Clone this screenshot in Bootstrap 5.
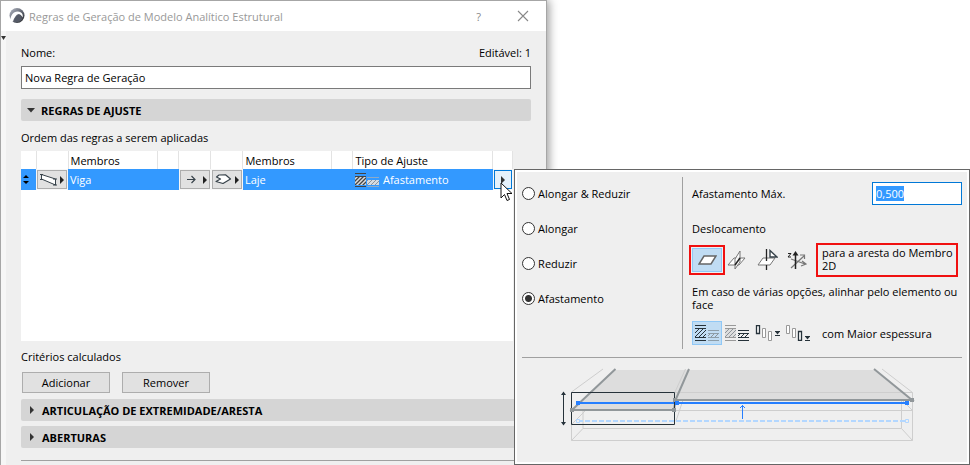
<!DOCTYPE html>
<html lang="pt">
<head>
<meta charset="utf-8">
<meta name="viewport" content="width=device-width, initial-scale=1">
<title>Regras de Geração de Modelo Analítico Estrutural</title>
<link rel="stylesheet" href="https://cdn.jsdelivr.net/npm/bootstrap@5.3.0/dist/css/bootstrap.min.css">
<style>
body{font:11px/13px "Open Sans","Noto Sans",sans-serif;color:#000;background:#fff}
svg{display:block;flex:none}
.dialog{width:56.4%;background:#efefef;border:1px solid #a6a6a6;border-bottom:0;box-shadow:2px 0 9px rgba(0,0,0,.4)}
.titlebar{height:30px;background:#fff;color:#999;padding:0 17px 0 8px}
.titlebar button{color:#888;background:none;border:0;padding:0;line-height:13px}
.rail{width:5px;background:#f6f6f6;padding-top:5px}
.panel{padding:15px 15px 0}
.name-row{margin-bottom:7px}
.field{font-size:11px;line-height:13px;min-height:0;height:23px;border:1px solid #7a7a7a;border-radius:0;padding:0 3px;color:#000;background:#fff;box-shadow:none!important}
.section-head{height:22px;background:#d5d5d5;border:0;border-radius:2px;padding:0 6px;font-weight:700;color:#000;text-align:left}
.section-head span{margin-left:6px}
.section-head .caret-right{margin:0 2px 0 3px}
.section-first{margin:10px 0}
.section-gap{margin-top:5px}
.rules-box{margin:7px 18px 0 0;background:#fff;height:190px}
.criteria{margin:9px 0}
.actions{margin-bottom:6px;padding-left:1px;gap:12px}
.rules{table-layout:fixed;width:100%}
.rules th{height:18px;padding:0 2px;font-weight:400;border-right:1px solid #e3e3e3}
.rules td{height:21px;padding:0 2px;color:#fff;background:#3399ff}
.rules td.tool{background:#f7f7f7;padding:1px}
.tool button{width:100%;height:19px;background:#e1e1e1;border:1px solid #adadad;padding:0 2px;display:flex;align-items:center;justify-content:space-between}
.tool button.active{background:#e5f1fb;border-color:#0078d7;justify-content:center}
.w-handle{width:15px}.w-tool{width:32px}.w-gap{width:21px}.w-more{width:20px}.w-first{width:18.3%}.w-second{width:18.1%}
.push{width:88px;height:21px;background:#e1e1e1;border:1px solid #adadad;padding:0;color:#000}
.rule-line{border-top:1px solid #a0a0a0}
.end-line{margin-top:12px}
.popup{position:absolute;left:53%;right:0;top:169px;background:#efefef;border:1px solid #666;box-shadow:inset 0 0 0 2px #fff;padding:7px 7px 19px}
.modes{width:160px;gap:22px;padding-top:10px}
.modes .form-check-input{width:13px;height:13px;margin:0;border:1px solid #333;background-color:#fff;box-shadow:none;float:none}
.modes .form-check-input:checked{background-image:radial-gradient(circle,#333 0 3px,transparent 4px)}
.modes label{margin-left:3px}
.options{border-left:1px solid #a0a0a0;padding:5px 0 4px 9px}
.offset-title{margin:17px 0 8px}
.align-title{margin:8px 0 10px}
.field-max{width:90px;border-color:#0078d7!important}
.field-max::selection{background:#3399ff;color:#fff}
.icon-btn{width:30px;height:24px;padding:0;border:1px solid transparent;background:none;display:flex;align-items:center;justify-content:center}
.icon-btn.on{background:#c0dcf3;border-color:#90c8f6}
.marked{outline:2px solid #f01010;outline-offset:1px}
.note{border:2px solid #f01010;padding:1px 2px 3px 4px;width:142px;height:34px}
.align-label{margin-left:10px}
.diagram{margin:9px auto 0 36px}
.cursor{position:absolute;left:-15px;top:12px}
</style>
<script src="https://cdn.jsdelivr.net/npm/bootstrap@5.3.0/dist/js/bootstrap.bundle.min.js"></script>
</head>
<body class="overflow-hidden position-relative">
<svg width="0" height="0" class="position-absolute" aria-hidden="true">
<defs>
<pattern id="hd" width="4" height="4" patternUnits="userSpaceOnUse"><path d="M-1 5L5 -1M-1 1L1 -1M3 5L5 3" stroke="#26323a" stroke-width="1"/></pattern>
<pattern id="hg" width="4" height="4" patternUnits="userSpaceOnUse"><path d="M-1 5L5 -1M-1 1L1 -1M3 5L5 3" stroke="#8d949a" stroke-width="1"/></pattern>
<pattern id="hw" width="4" height="4" patternUnits="userSpaceOnUse"><path d="M0 0H4V4H0z" fill="#ddd"/><path d="M-1 5L5 -1M-1 1L1 -1M3 5L5 3" stroke="#444" stroke-width="1.3"/></pattern>
</defs>
</svg>

<main class="dialog d-flex flex-column vh-100">
  <header class="titlebar d-flex align-items-center">
    <svg width="16" height="16" viewBox="0 0 16 16"><defs><linearGradient id="lg" x2="1" y2="1"><stop offset="0" stop-color="#b9bdc8"/><stop offset=".6" stop-color="#555a66"/><stop offset="1" stop-color="#222"/></linearGradient></defs><circle cx="8" cy="7.5" r="7.500" fill="url(#lg)"/><path d="M1 13Q1.500 7 5 4.500Q9 2.500 12 4.500Q14.500 6.500 13.500 9.500Q12 6 9.500 6Q6 7 4 13.500z" fill="#fff"/><path d="M5 13.500Q6.500 7.500 9.500 7Q12.500 7 13 11.500Q9.500 15.500 5 13.500z" fill="#555a66"/></svg>
    <span class="ms-1 flex-grow-1">Regras de Geração de Modelo Analítico Estrutural</span>
    <button type="button" class="me-4" aria-label="Ajuda">?</button>
    <button type="button" class="ms-2 ps-1" aria-label="Fechar"><svg width="12" height="12" viewBox="0 0 12 12"><path d="M1 1L11 11M11 1L1 11" stroke="#888" stroke-width="1.1"/></svg></button>
  </header>
  <div class="d-flex flex-grow-1">
    <div class="rail"><svg width="5" height="4" viewBox="0 0 5 4"><path d="M0 0H5L2.500 4z" fill="#333"/></svg></div>
    <div class="panel flex-grow-1">
      <div class="name-row d-flex justify-content-between">
        <label for="ruleName">Nome:</label><span>Editável: 1</span>
      </div>
      <input id="ruleName" class="form-control field" value="Nova Regra de Geração">
      <button type="button" class="section-head section-first w-100 d-flex align-items-center"><svg width="8" height="5" viewBox="0 0 8 5"><path d="M0 0H8L4 4.500z" fill="#333"/></svg><span>REGRAS DE AJUSTE</span></button>
      <div>Ordem das regras a serem aplicadas</div>
      <div class="rules-box">
        <table class="rules">
          <colgroup><col class="w-handle"><col class="w-tool"><col class="w-first"><col class="w-gap"><col class="w-tool"><col class="w-tool"><col class="w-second"><col class="w-gap"><col><col class="w-more"></colgroup>
          <thead><tr><th></th><th></th><th>Membros</th><th></th><th></th><th></th><th>Membros</th><th></th><th>Tipo de Ajuste</th><th></th></tr></thead>
          <tbody><tr>
            <td><svg width="6" height="9" viewBox="0 0 6 9"><path d="M0 3L3 0L6 3zM0 6L3 9L6 6z" fill="#000"/></svg></td>
            <td class="tool"><button type="button" aria-label="Viga"><svg width="17" height="13" viewBox="0 0 17 13"><path d="M1.500 1.500L15.500 6V12L1.500 6z" fill="#fff" stroke="#37424a"/><path d="M0 1.500H3M0 6.500H3M13 6H17M13 12H17" stroke="#37424a"/></svg><svg width="4" height="8" viewBox="0 0 4 8"><path d="M0 0L4 4L0 8z" fill="#222"/></svg></button></td>
            <td colspan="2">Viga</td>
            <td class="tool"><button type="button" aria-label="Direção"><svg class="ms-1" width="9" height="9" viewBox="0 0 9 9"><path d="M0 4.500H8M4.500 1L8 4.500L4.500 8" fill="none" stroke="#37424a" stroke-width="1.200"/></svg><svg width="4" height="8" viewBox="0 0 4 8"><path d="M0 0L4 4L0 8z" fill="#222"/></svg></button></td>
            <td class="tool"><button type="button" aria-label="Laje"><svg width="17" height="11" viewBox="0 0 17 11"><path d="M4 1L10.500 .8L15.500 5L8 9.500L1 7.500L5.500 5L1.500 3z" fill="#fff" stroke="#37424a" stroke-width="1.200" stroke-linejoin="round"/></svg><svg width="4" height="8" viewBox="0 0 4 8"><path d="M0 0L4 4L0 8z" fill="#222"/></svg></button></td>
            <td colspan="2">Laje</td>
            <td><div class="d-flex align-items-center gap-1"><svg width="24" height="14" viewBox="0 0 24 14"><path d="M0 .5H11M0 13.500H11M0 3.500H11" stroke="#444"/><path d="M0 4H11V12H0z" fill="url(#hw)"/><path d="M12 4.500H24M12 13.500H24" stroke="#8caac8"/><path d="M12 7H24V12H12z" fill="#d5dbe2"/><path d="M12 7H24V12H12z" fill="url(#hg)"/></svg><span>Afastamento</span></div></td>
            <td class="tool"><button type="button" class="active" aria-label="Opções"><svg width="4" height="8" viewBox="0 0 4 8"><path d="M0 0L4 4L0 8z" fill="#333"/></svg></button></td>
          </tr></tbody>
        </table>
      </div>
      <div class="criteria">Critérios calculados</div>
      <div class="actions d-flex"><button type="button" class="push">Adicionar</button><button type="button" class="push">Remover</button></div>
      <button type="button" class="section-head w-100 d-flex align-items-center"><svg class="caret-right" width="4" height="8" viewBox="0 0 4 8"><path d="M0 0L4 4L0 8z" fill="#333"/></svg><span>ARTICULAÇÃO DE EXTREMIDADE/ARESTA</span></button>
      <button type="button" class="section-head section-gap w-100 d-flex align-items-center"><svg class="caret-right" width="4" height="8" viewBox="0 0 4 8"><path d="M0 0L4 4L0 8z" fill="#333"/></svg><span>ABERTURAS</span></button>
      <div class="rule-line end-line"></div>
    </div>
  </div>
</main>

<section class="popup" aria-label="Tipo de Ajuste">
  <div class="d-flex">
    <div class="modes d-flex flex-column flex-shrink-0">
      <div class="d-flex align-items-center"><input class="form-check-input" type="radio" name="mode" id="m1"><label for="m1">Alongar &amp; Reduzir</label></div>
      <div class="d-flex align-items-center"><input class="form-check-input" type="radio" name="mode" id="m2"><label for="m2">Alongar</label></div>
      <div class="d-flex align-items-center"><input class="form-check-input" type="radio" name="mode" id="m3"><label for="m3">Reduzir</label></div>
      <div class="d-flex align-items-center"><input class="form-check-input" type="radio" name="mode" id="m4" checked><label for="m4">Afastamento</label></div>
    </div>
    <div class="options flex-grow-1">
      <div class="d-flex align-items-center justify-content-between"><label for="maxGap">Afastamento Máx.</label><input id="maxGap" class="form-control field field-max" value="0,500"></div>
      <div class="offset-title">Deslocamento</div>
      <div class="d-flex align-items-center">
        <button type="button" class="icon-btn on marked" aria-label="Aresta do Membro 2D"><svg width="19" height="10" viewBox="0 0 19 10"><path d="M6 1H18L13 9H1z" fill="#fff" stroke="#666" stroke-width="1.500"/></svg></button>
        <button type="button" class="icon-btn" aria-label="Plano"><svg width="20" height="20" viewBox="0 0 20 20"><path d="M1 15L7 8H18L12 15z" fill="#fff" stroke="#777"/><path d="M8 9L13 1V12L8 19z" fill="#fff" fill-opacity=".8" stroke="#777"/><path d="M8 15L13 8" stroke="#222" stroke-width="1.500"/></svg></button>
        <button type="button" class="icon-btn" aria-label="Perpendicular"><svg width="21" height="22" viewBox="0 0 21 22"><path d="M1 16L6 9H18L13 16z" fill="#fff" stroke="#777"/><path d="M9.500 0V12M9.500 16V21" stroke="#222" stroke-width="1.300"/><path d="M13 1.500V8H20z" fill="#fff" stroke="#37424a" stroke-width="1.400"/></svg></button>
        <button type="button" class="icon-btn" aria-label="Eixo Z"><svg width="20" height="19" viewBox="0 0 20 19"><path d="M1 2.500H4L1 6H4" fill="none" stroke="#222"/><path d="M4 8L18 13M4 17L17 5M15 10L19 13L14 15M13 4H17.500V8" fill="none" stroke="#777" stroke-width="1.200"/><path d="M8.500 18V2" stroke="#222" stroke-width="1.500"/><path d="M5.500 4.500L8.500 0L11.500 4.500z" fill="#222"/></svg></button>
        <div class="note ms-auto me-1">para a aresta do Membro 2D</div>
      </div>
      <div class="align-title">Em caso de várias opções, alinhar pelo elemento ou face</div>
      <div class="d-flex align-items-center">
        <button type="button" class="icon-btn on" aria-label="Maior espessura"><svg width="25" height="16" viewBox="0 0 25 16"><path d="M0 .5H11M0 3.500H11M0 12.500H11M0 15.500H11" stroke="#26323a"/><path d="M0 4H11V12H0z" fill="url(#hd)"/><path d="M13 5.500H24M13 8.500H24M13 12.500H24M13 15.500H24" stroke="#8c9da9"/><path d="M13 9H24V12H13z" fill="url(#hg)"/></svg></button>
        <button type="button" class="icon-btn" aria-label="Menor espessura"><svg width="25" height="16" viewBox="0 0 25 16"><path d="M0 .5H11M0 3.500H11M0 12.500H11M0 15.500H11" stroke="#999"/><path d="M0 4H11V12H0z" fill="#ddd"/><path d="M0 4H11V12H0z" fill="url(#hg)"/><path d="M13 5.500H24M13 8.500H24M13 12.500H24M13 15.500H24" stroke="#26323a"/><path d="M13 9H24V12H13z" fill="url(#hd)"/></svg></button>
        <button type="button" class="icon-btn" aria-label="Mais alto"><svg width="25" height="16" viewBox="0 0 25 16"><path d="M1.500 .5H4.500V8.500H1.500z" fill="#fff" stroke="#26323a" stroke-width="1.300"/><path d="M7.500 3.500H10.500V12.500H7.500zM13.500 6.500H16.500V15.500H13.500z" fill="#fff" stroke="#999"/><path d="M20 6.500H25M20 10.500H25" stroke="#26323a"/><path d="M20.500 7H24.500L22.500 9.500z" fill="#26323a"/></svg></button>
        <button type="button" class="icon-btn" aria-label="Mais baixo"><svg width="25" height="16" viewBox="0 0 25 16"><path d="M1.500 .5H4.500V8.500H1.500zM7.500 3.500H10.500V12.500H7.500z" fill="#fff" stroke="#999"/><path d="M13.500 6.500H16.500V15.500H13.500z" fill="#fff" stroke="#26323a" stroke-width="1.300"/><path d="M20 11.500H25M20 15.500H25" stroke="#26323a"/><path d="M20.500 12H24.500L22.500 14.500z" fill="#26323a"/></svg></button>
        <span class="align-label">com Maior espessura</span>
      </div>
    </div>
  </div>
  <div class="rule-line mt-2"></div>
  <svg class="diagram" width="360" height="78" viewBox="558 367 360 78" role="img" aria-label="Diagrama de afastamento">
    <path d="M572 410L615.500 370H689L675 400L674 410z" fill="#ddd"/><path d="M675 400L689 370H874L912 400z" fill="#ddd"/>
    <g fill="none" stroke="#cecece"><path d="M571.500 392V440.500H912.500V392.500H675M571.500 392L603 369M912.500 392.500L882 369M583 411V428.500H901.500V400M571.500 440.500L583 428.500M912.500 440.500L901.500 428.500M571.500 424.500L585 411M675 410.500H912.500L902 400M685.500 369L675 392M676 421L683 400"/></g>
    <path d="M578 421H907" stroke="#b3d7ff" stroke-width="2" stroke-dasharray="5 2"/>
    <g fill="#efefef" stroke="#b3d7ff"><path d="M576.500 419.500H579.500V422.500H576.500zM905.500 419.500H908.500V422.500H905.500z"/></g>
    <path d="M615.500 369L572 410H674L675.500 400L689 369M675 400H912L874 369" fill="none" stroke="#91979a" stroke-width="2"/>
    <path d="M578 403H907" stroke="#267fff" stroke-width="2"/>
    <path d="M571.500 392.500H674.500V424.500H571.500zM563.500 392V425" fill="none" stroke="#26323a"/>
    <path d="M561 395L563.500 391.500L566 395zM561 422L563.500 425.500L566 422z" fill="#26323a"/>
    <path d="M570 408H574V412H570zM672 408H676V412H672zM673 398H677V402H673zM910 398H914V402H910z" fill="#91979a"/>
    <path d="M576 401H580V405H576zM675 401H679V405H675zM905 401H909V405H905z" fill="#267fff"/>
    <path d="M742.500 405V419M740 408L742.500 405.500L745 408" fill="none" stroke="#267fff"/>
  </svg>
  <svg class="cursor" width="13" height="20" viewBox="0 0 13 20"><path d="M1 1V16L4.500 12.500L7 18.500L9.500 17.500L7 11.500H12z" fill="#fff" stroke="#111"/></svg>
</section>
<script>
const maxGap = document.getElementById('maxGap');
maxGap.focus();
maxGap.select();
</script>
</body>
</html>
